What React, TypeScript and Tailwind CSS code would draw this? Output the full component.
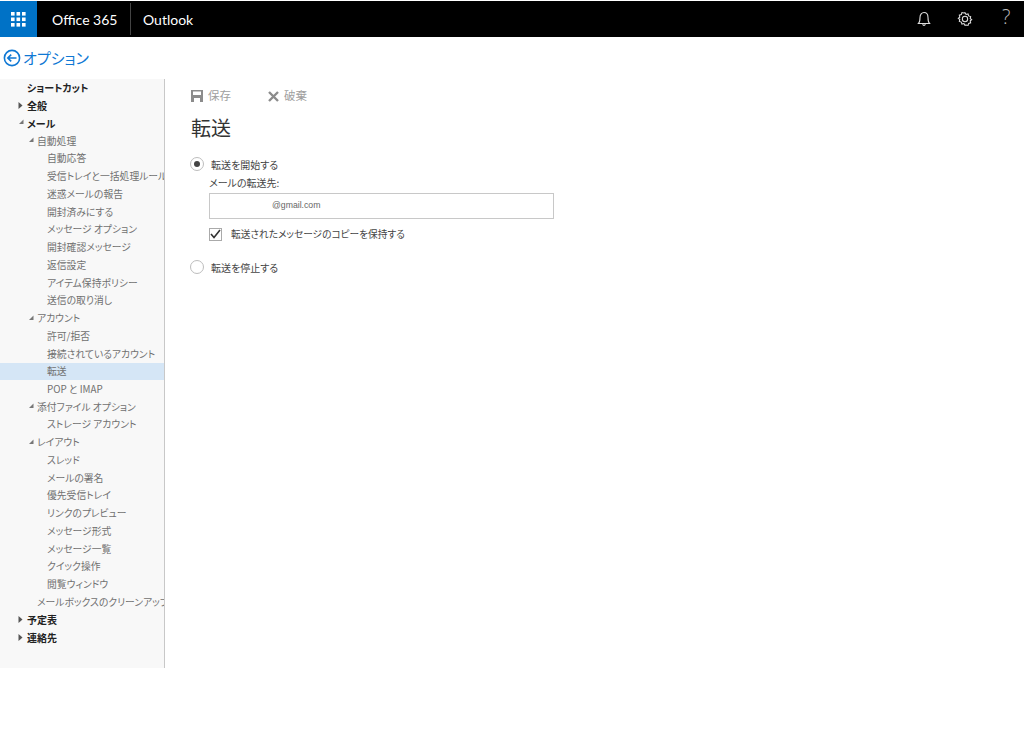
import React from "react";

const font = { fontFamily: '"Noto Sans CJK JP", "Noto Sans", sans-serif' };
const latin = { fontFamily: 'Lato, "Open Sans", sans-serif' };

type Row = { t: string; lv: 0 | 1 | 2 | 3; arrow?: "r" | "d"; sel?: boolean };

const rows: Row[] = [
  { t: "ショートカット", lv: 0 },
  { t: "全般", lv: 0, arrow: "r" },
  { t: "メール", lv: 0, arrow: "d" },
  { t: "自動処理", lv: 1, arrow: "d" },
  { t: "自動応答", lv: 2 },
  { t: "受信トレイと一括処理ルール", lv: 2 },
  { t: "迷惑メールの報告", lv: 2 },
  { t: "開封済みにする", lv: 2 },
  { t: "メッセージ オプション", lv: 2 },
  { t: "開封確認メッセージ", lv: 2 },
  { t: "返信設定", lv: 2 },
  { t: "アイテム保持ポリシー", lv: 2 },
  { t: "送信の取り消し", lv: 2 },
  { t: "アカウント", lv: 1, arrow: "d" },
  { t: "許可/拒否", lv: 2 },
  { t: "接続されているアカウント", lv: 2 },
  { t: "転送", lv: 2, sel: true },
  { t: "POP と IMAP", lv: 2 },
  { t: "添付ファイル オプション", lv: 1, arrow: "d" },
  { t: "ストレージ アカウント", lv: 2 },
  { t: "レイアウト", lv: 1, arrow: "d" },
  { t: "スレッド", lv: 2 },
  { t: "メールの署名", lv: 2 },
  { t: "優先受信トレイ", lv: 2 },
  { t: "リンクのプレビュー", lv: 2 },
  { t: "メッセージ形式", lv: 2 },
  { t: "メッセージ一覧", lv: 2 },
  { t: "クイック操作", lv: 2 },
  { t: "閲覧ウィンドウ", lv: 2 },
  { t: "メールボックスのクリーンアップ", lv: 3 },
  { t: "予定表", lv: 0, arrow: "r" },
  { t: "連絡先", lv: 0, arrow: "r" },
];

function Arrow({ dir }: { dir: "r" | "d" }) {
  return dir === "r" ? (
    <svg width="5" height="7" viewBox="0 0 5 7" className="block">
      <path d="M0.5 0 L4.5 3.5 L0.5 7 Z" fill="#555" />
    </svg>
  ) : (
    <svg width="6" height="6" viewBox="0 0 6 6" className="block">
      <path d="M5.5 0.5 V5 H1 Z" fill="#777" />
    </svg>
  );
}

function NavRow({ r }: { r: Row }) {
  const pad =
    r.lv === 0 ? "pl-[27px]" : r.lv === 1 ? "pl-[37px]" : r.lv === 2 ? "pl-[47px]" : "pl-[37px]";
  const text = r.lv === 0 ? "text-[10px] font-bold text-[#222]" : "text-[9.8px] text-[#707070]";
  const arrowPos = r.lv === 0 ? "left-[18px]" : "left-[28px]";
  return (
    <div
      className={`relative h-[17.74px] shrink-0 flex items-center whitespace-nowrap overflow-hidden ${pad} ${text} ${
        r.sel ? "bg-[#d5e6f6]" : ""
      }`}
    >
      {r.arrow && (
        <span className={`absolute top-[5px] ${arrowPos}`}>
          <Arrow dir={r.arrow} />
        </span>
      )}
      {r.t}
    </div>
  );
}

export default function App() {
  return (
    <div
      className="w-[1024px] h-[749px] bg-white overflow-hidden flex flex-col [font-feature-settings:'palt']"
      style={font}
    >
      <header className="mt-px h-[36px] shrink-0 bg-black flex items-stretch text-white">
        <div className="w-[37px] bg-[#0072c6] flex items-center justify-center">
          <svg width="15" height="15" viewBox="0 0 15 15" fill="#fff">
            {[0, 5.5, 11].map((y) =>
              [0, 5.5, 11].map((x) => <rect key={`${x}-${y}`} x={x} y={y} width="3.6" height="3.6" />)
            )}
          </svg>
        </div>
        <div className="ml-[15px] w-[64px] flex items-center text-[14px] whitespace-nowrap" style={latin}>
          Office 365
        </div>
        <div className="ml-[14px] my-[2px] w-px bg-[#444]" />
        <div className="ml-[12px] flex items-center text-[14px]" style={latin}>
          Outlook
        </div>
        <div className="ml-auto flex items-center text-[#ccc]">
          <svg width="14" height="16" viewBox="0 0 14 16" fill="none" stroke="#ddd" strokeWidth="1.1">
            <path d="M1.5 12.5 C3 11 3 9 3 6.5 C3 3.5 4.8 1.5 7 1.5 C9.2 1.5 11 3.5 11 6.5 C11 9 11 11 12.5 12.5 Z" />
            <path d="M5.8 13 C6 15 8 15 8.2 13" />
          </svg>
          <svg className="ml-[26px]" width="16" height="16" viewBox="0 0 24 24" fill="none" stroke="#ddd" strokeWidth="1.6">
            <path d="M12 2.5l1.6 2.6 3-.7.9 3 3 .9-.7 3 2.2 1.7-2.2 1.7.7 3-3 .9-.9 3-3-.7L12 21.5l-1.6-2.6-3 .7-.9-3-3-.9.7-3L2 11l2.2-1.7-.7-3 3-.9.9-3 3 .7z" />
            <circle cx="12" cy="12" r="4" />
          </svg>
          <span
            className="ml-[29px] mr-[12px] w-[10px] text-[20px] leading-none text-[#bbb] -mt-[5px]"
            style={{ fontFamily: '"Open Sans", sans-serif', fontWeight: 300 }}
          >
            ?
          </span>
        </div>
      </header>

      <div className="mt-[10px] ml-[3px] h-[22px] shrink-0 flex items-center">
        <svg width="18" height="18" viewBox="0 0 18 18" fill="none" stroke="#0f78d4" strokeWidth="1.6">
          <circle cx="9" cy="9" r="7.6" />
          <path d="M13.5 9 H5 M8.2 5.6 L4.8 9 L8.2 12.4" />
        </svg>
        <span className="ml-[2px] text-[15px] text-[#0f78d4]">オプション</span>
      </div>

      <div className="mt-[10px] flex">
        <nav className="w-[165px] h-[589px] shrink-0 bg-[#f8f8f8] border-r border-[#c8c8c8] flex flex-col overflow-hidden">
          {rows.map((r) => (
            <NavRow key={r.t} r={r} />
          ))}
        </nav>

        <main className="ml-[26px] flex-1 text-[#555]">
          <div className="mt-[9px] h-[16px] flex items-center text-[11.5px] text-[#a0a0a0]">
            <svg width="12" height="12" viewBox="0 0 12 12" fill="#8c8c8c">
              <path d="M0 0 H12 V12 H0 Z M2 1.5 V5 H10 V1.5 Z M3 8 V12 H9 V8 Z" fillRule="evenodd" />
            </svg>
            <span className="ml-[5px]">保存</span>
            <svg className="ml-[37px]" width="11" height="11" viewBox="0 0 11 11" stroke="#8c8c8c" strokeWidth="2.4">
              <path d="M1 1 L10 10 M10 1 L1 10" />
            </svg>
            <span className="ml-[5px]">破棄</span>
          </div>
          <h1 className="mt-[9px] text-[20px] leading-[30px] text-[#333]">転送</h1>

          <div className="mt-[13px] flex items-center h-[16px] -ml-px">
            <span className="w-[14px] h-[14px] rounded-full border border-[#bdbdbd] flex items-center justify-center">
              <span className="w-[6px] h-[6px] rounded-full bg-[#444]" />
            </span>
            <span className="ml-[7px] text-[10px] text-[#444]">転送を開始する</span>
          </div>
          <div className="mt-[3px] ml-[18px] text-[10px] leading-[16px] text-[#444]">メールの転送先:</div>
          <div
            className="mt-[2px] ml-[18px] w-[345px] h-[26px] border border-[#c8c8c8] bg-white flex items-center pl-[62px] text-[8.7px] text-[#666]"
            style={{ fontFamily: '"Liberation Sans", sans-serif' }}
          >
            @gmail.com
          </div>
          <div className="mt-[8px] ml-[18px] flex items-center h-[14px]">
            <span className="w-[13px] h-[13px] border border-[#aaa] flex items-center justify-center">
              <svg width="11" height="10" viewBox="0 0 11 10" fill="none" stroke="#333" strokeWidth="1.6">
                <path d="M1 5 L4 8.5 L10 1" />
              </svg>
            </span>
            <span className="ml-[9px] text-[9.7px] text-[#444]">転送されたメッセージのコピーを保持する</span>
          </div>
          <div className="mt-[18px] flex items-center h-[16px] -ml-px">
            <span className="w-[14px] h-[14px] rounded-full border border-[#bdbdbd]" />
            <span className="ml-[7px] text-[10px] text-[#444]">転送を停止する</span>
          </div>
        </main>
      </div>
    </div>
  );
}
